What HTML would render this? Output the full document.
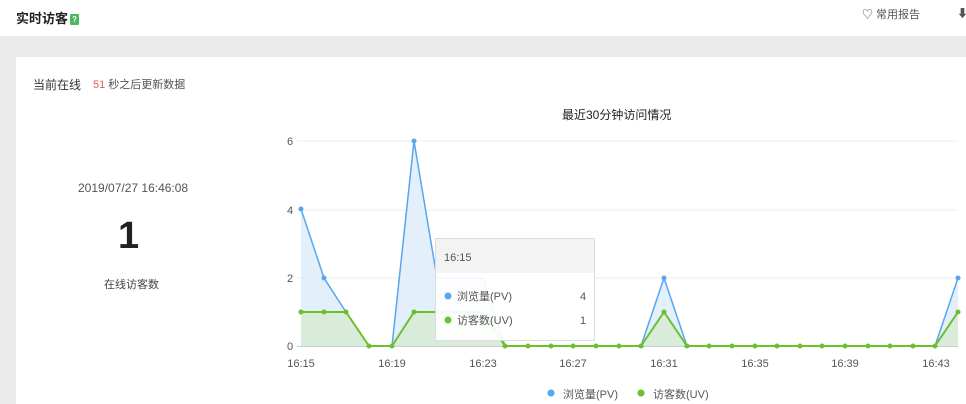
<!DOCTYPE html>
<html><head><meta charset="utf-8"><style>
body{margin:0;width:966px;height:404px;overflow:hidden;background:#fff;font-family:"Liberation Sans","Noto Sans CJK SC",sans-serif;position:relative}
.hd{position:absolute;left:0;top:0;width:966px;height:36px;background:#fff}
.t{position:absolute;left:16px;top:8px;font-size:13px;font-weight:bold;color:#222}
.q{display:inline-block;width:9px;height:11px;background:#4cb95f;color:#fff;font-size:8px;line-height:11px;text-align:center;border-radius:1px;vertical-align:1px;margin-left:2px}
.gray{position:absolute;left:0;top:36px;width:966px;height:368px;background:#ebebeb}
.card{position:absolute;left:16px;top:57px;width:950px;height:347px;background:#fff}
.s{position:absolute;font-size:12px;color:#333}
</style></head><body>
<div class="hd"><div class="t">实时访客<span class="q">?</span></div>
<div class="s" style="left:862px;top:6px;font-size:11px;color:#555">♡ 常用报告</div>
<div class="s" style="left:957px;top:5px;font-size:11px;color:#555">⬇</div></div>
<div class="gray"></div>
<div class="card"></div>
<div class="s" style="left:33px;top:76px">当前在线</div>
<div class="s" style="left:93px;top:76px;font-size:11px;color:#555"><span style="color:#e55">51</span> 秒之后更新数据</div>
<div class="s" style="left:78px;top:181px;color:#555">2019/07/27 16:46:08</div>
<div class="s" style="left:118px;top:215px;font-size:38px;font-weight:bold;color:#222">1</div>
<div class="s" style="left:104px;top:276px;font-size:11px;color:#444">在线访客数</div>
<div class="s" style="left:562px;top:106px;color:#222">最近30分钟访问情况</div>
<svg style="position:absolute;left:0;top:0" width="966" height="404" font-family="Liberation Sans" font-size="11" fill="#555">
<g stroke="#eee"><line x1="297" x2="958" y1="141" y2="141"/><line x1="297" x2="958" y1="210" y2="210"/><line x1="297" x2="958" y1="278" y2="278"/></g>
<line x1="297" x2="958" y1="346.5" y2="346.5" stroke="#ccc"/>
<text x="287" y="145">6</text><text x="287" y="214">4</text><text x="287" y="282">2</text><text x="287" y="350">0</text>
<g text-anchor="middle"><text x="301" y="367">16:15</text><text x="392" y="367">16:19</text><text x="483" y="367">16:23</text><text x="573" y="367">16:27</text><text x="664" y="367">16:31</text><text x="755" y="367">16:35</text><text x="845" y="367">16:39</text><text x="936" y="367">16:43</text></g>
<path d="M301,209 L324,278 L346,312 L369,346 L392,346 L414,141 L437,278 L460,278 L483,278 L505,346 L641,346 L664,278 L687,346 L935,346 L958,278 L958,346 L301,346Z" fill="#e3effb"/>
<path d="M301,312 L346,312 L369,346 L392,346 L414,312 L483,312 L505,346 L641,346 L664,312 L687,346 L935,346 L958,312 L958,346 L301,346Z" fill="#d9ecd9"/>
<path d="M301,209 L324,278 L346,312 L369,346 L392,346 L414,141 L437,278 L460,278 L483,278 L505,346 L641,346 L664,278 L687,346 L935,346 L958,278" fill="none" stroke="#58a6f0" stroke-width="1.5"/>
<path d="M301,312 L346,312 L369,346 L392,346 L414,312 L483,312 L505,346 L641,346 L664,312 L687,346 L935,346 L958,312" fill="none" stroke="#6cc02c" stroke-width="2"/>
<g fill="#58a6f0"><circle cx="301" cy="209" r="2.5"/><circle cx="324" cy="278" r="2.5"/><circle cx="414" cy="141" r="2.5"/><circle cx="664" cy="278" r="2.5"/><circle cx="958" cy="278" r="2.5"/></g>
<g fill="#6cc02c"><circle cx="301" cy="312" r="2.5"/><circle cx="324" cy="312" r="2.5"/><circle cx="346" cy="312" r="2.5"/><circle cx="369" cy="346" r="2.5"/><circle cx="392" cy="346" r="2.5"/><circle cx="414" cy="312" r="2.5"/><circle cx="437" cy="312" r="2.5"/>
<circle cx="505" cy="346" r="2.5"/><circle cx="528" cy="346" r="2.5"/><circle cx="551" cy="346" r="2.5"/><circle cx="573" cy="346" r="2.5"/><circle cx="596" cy="346" r="2.5"/><circle cx="619" cy="346" r="2.5"/><circle cx="641" cy="346" r="2.5"/><circle cx="664" cy="312" r="2.5"/><circle cx="687" cy="346" r="2.5"/><circle cx="709" cy="346" r="2.5"/><circle cx="732" cy="346" r="2.5"/><circle cx="755" cy="346" r="2.5"/><circle cx="777" cy="346" r="2.5"/><circle cx="800" cy="346" r="2.5"/><circle cx="822" cy="346" r="2.5"/><circle cx="845" cy="346" r="2.5"/><circle cx="868" cy="346" r="2.5"/><circle cx="890" cy="346" r="2.5"/><circle cx="913" cy="346" r="2.5"/><circle cx="935" cy="346" r="2.5"/><circle cx="958" cy="312" r="2.5"/></g>
<rect x="435.5" y="238.5" width="159" height="102" fill="#fff" fill-opacity="0.92" stroke="#ddd"/>
<rect x="436" y="239" width="158" height="34" fill="#f3f3f3"/>
<text x="444" y="261" fill="#555">16:15</text>
<circle cx="448" cy="296" r="3.5" fill="#58a6f0"/><text x="457" y="300" fill="#555">浏览量(PV)</text><text x="580" y="300">4</text>
<circle cx="448" cy="320" r="3.5" fill="#6cc02c"/><text x="457" y="324" fill="#555">访客数(UV)</text><text x="580" y="324">1</text>
<circle cx="551" cy="393" r="3.5" fill="#58a6f0"/><text x="563" y="398">浏览量(PV)</text>
<circle cx="641" cy="393" r="3.5" fill="#6cc02c"/><text x="653" y="398">访客数(UV)</text>
</svg>
</body></html>
